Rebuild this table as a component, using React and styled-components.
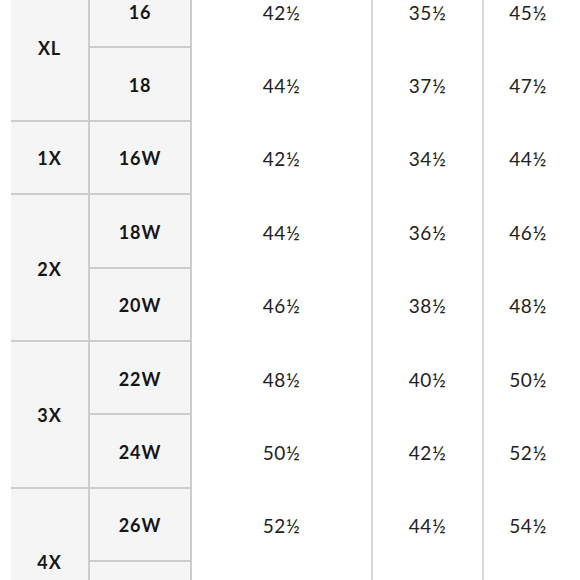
import React from "react";
import styled, { createGlobalStyle } from "styled-components";

const Global = createGlobalStyle`
  html, body { margin: 0; padding: 0; background: #ffffff; overflow: hidden; }
  body { font-family: "Lato", "Liberation Sans", sans-serif; color: #1c1c1c; }
`;

const ROW_H = 73.375;

const Chart = styled.div`
  display: grid;
  grid-template-columns: 79px 102px 181px 111px 88px;
  grid-auto-rows: ${ROW_H}px;
  margin: -25px 0 0 11px;
  width: 561px;
  height: 605px;
  overflow: hidden;
`;

const Cell = styled.div`
  box-sizing: border-box;
  display: flex;
  align-items: center;
  justify-content: center;
  grid-column: ${(p) => p.$col};
  grid-row: ${(p) => p.$row} / span ${(p) => p.$span || 1};
`;

const LabelCell = styled(Cell)`
  background: #f5f5f5;
  border-right: 2px solid #cdcdcd;
  border-bottom: 2px solid #cdcdcd;
  font-size: 18px;
  font-weight: 700;
  letter-spacing: 0.9px;
  color: #161616;
  padding-top: 2px;
`;

const ValueCell = styled(Cell)`
  background: #ffffff;
  border-right: ${(p) => (p.$divider ? "2px solid #d8d8d8" : "none")};
  font-size: 19px;
  font-weight: 400;
  letter-spacing: 0.6px;
  color: #222222;
  padding-top: 1px;
`;

const groups = [
  { label: "XL", sizes: [["16", "42½", "35½", "45½"], ["18", "44½", "37½", "47½"]] },
  { label: "1X", sizes: [["16W", "42½", "34½", "44½"]] },
  { label: "2X", sizes: [["18W", "44½", "36½", "46½"], ["20W", "46½", "38½", "48½"]] },
  { label: "3X", sizes: [["22W", "48½", "40½", "50½"], ["24W", "50½", "42½", "52½"]] },
  { label: "4X", sizes: [["26W", "52½", "44½", "54½"], ["", "", "", ""]] },
];

export default function App() {
  let row = 1;
  const cells = [];
  groups.forEach((g) => {
    cells.push(
      <LabelCell key={`g-${g.label}`} $col={1} $row={row} $span={g.sizes.length}>
        {g.label}
      </LabelCell>
    );
    g.sizes.forEach((s, si) => {
      cells.push(
        <LabelCell key={`s-${g.label}-${si}`} $col={2} $row={row}>
          {s[0]}
        </LabelCell>
      );
      s.slice(1).forEach((v, i) => {
        cells.push(
          <ValueCell key={`v-${g.label}-${si}-${i}`} $col={3 + i} $row={row} $divider={i < 2}>
            {v}
          </ValueCell>
        );
      });
      row += 1;
    });
  });
  return (
    <>
      <Global />
      <Chart>{cells}</Chart>
    </>
  );
}
